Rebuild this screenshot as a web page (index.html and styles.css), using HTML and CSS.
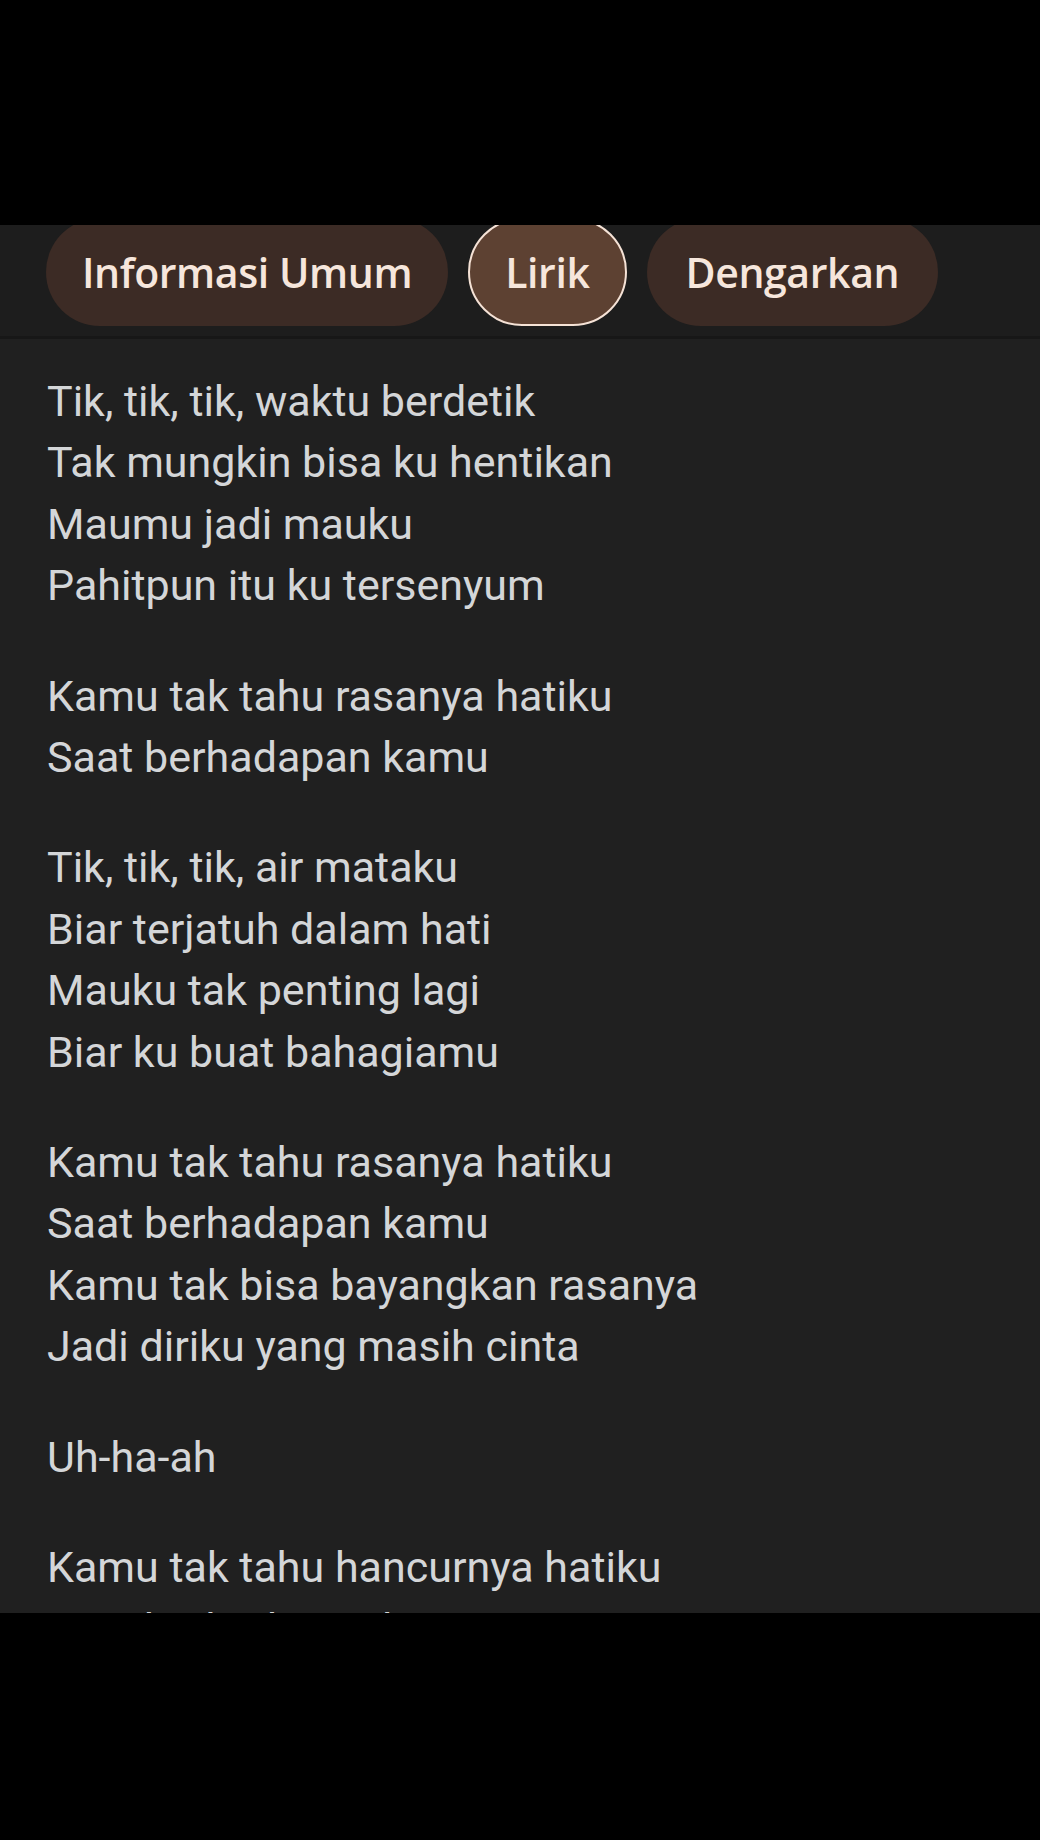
FILE: index.html
```html
<!DOCTYPE html>
<html lang="id">
<head>
<meta charset="utf-8">
<title>Lirik</title>
<link rel="stylesheet" href="styles.css">
</head>
<body>
<div class="top-black"></div>
<main class="panel">
  <nav class="tabbar">
    <div class="tabs">
      <span class="pill pill-info">Informasi Umum</span>
      <span class="pill pill-active">Lirik</span>
      <span class="pill pill-listen">Dengarkan</span>
    </div>
  </nav>
  <section class="lyrics">
    <p class="stanza">Tik, tik, tik, waktu berdetik<br>Tak mungkin bisa ku hentikan<br>Maumu jadi mauku<br>Pahitpun itu ku tersenyum</p>
    <p class="stanza">Kamu tak tahu rasanya hatiku<br>Saat berhadapan kamu</p>
    <p class="stanza">Tik, tik, tik, air mataku<br>Biar terjatuh dalam hati<br>Mauku tak penting lagi<br>Biar ku buat bahagiamu</p>
    <p class="stanza">Kamu tak tahu rasanya hatiku<br>Saat berhadapan kamu<br>Kamu tak bisa bayangkan rasanya<br>Jadi diriku yang masih cinta</p>
    <p class="stanza">Uh-ha-ah</p>
    <p class="stanza">Kamu tak tahu hancurnya hatiku<br>Saat berhadapan kamu</p>
  </section>
</main>
</body>
</html>
```
FILE: styles.css
```css
html, body {
  margin: 0;
  padding: 0;
  background: #000;
}
body {
  width: 1040px;
  height: 1840px;
  overflow: hidden;
  font-family: Roboto, "Liberation Sans", sans-serif;
}
.top-black {
  height: 225px;
  background: #000;
}
.panel {
  height: 1388px;
  overflow: hidden;
  background: #202020;
}
.tabbar {
  height: 118px;
  background: #1d1d1d;
  border-bottom: 3px solid #171717;
}
.tabs {
  display: flex;
  gap: 20px;
  padding-left: 46px;
  margin-top: -7px;
}
.pill {
  box-sizing: border-box;
  height: 108px;
  display: flex;
  align-items: center;
  justify-content: center;
  padding: 0 37px;
  border-radius: 54px;
  background: #3c2b25;
  color: #f6e6dc;
  font-family: "Open Sans", Roboto, sans-serif;
  font-weight: 600;
  font-size: 41px;
  letter-spacing: -0.4px;
}
.pill-info {
  padding: 0 36px;
}
.pill-listen {
  padding: 0 39px;
}
.pill-active {
  background: #5d4132;
  border: 2px solid #f5e2d6;
  padding: 0 35px;
}
.lyrics {
  padding: 32px 0 0 47px;
  color: #d4d6d8;
  font-size: 43px;
  line-height: 61.4px;
}
.stanza {
  margin: 0 0 49px 0;
}
```
